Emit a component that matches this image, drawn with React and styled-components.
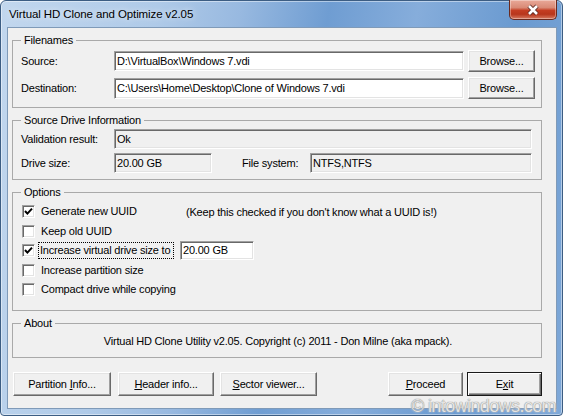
import React from "react";
import styled, { createGlobalStyle } from "styled-components";

const GlobalStyle = createGlobalStyle`
  html, body {
    margin: 0;
    padding: 0;
    background: #ffffff;
  }
  body {
    font-family: "Liberation Sans", Arial, sans-serif;
    color: #000;
  }
`;

const Page = styled.div`
  position: relative;
  width: 568px;
  height: 419px;
  background: #ffffff;
  overflow: hidden;
`;

const Window = styled.div`
  box-sizing: border-box;
  width: 563px;
  height: 416px;
  display: flex;
  flex-direction: column;
  padding: 0 5px 6px 6px;
  border: 1px solid #3c5d83;
  border-radius: 6px 6px 4px 4px;
  background: linear-gradient(
    100deg,
    #c2d7ee 0%,
    #afcae8 25%,
    #98b9e0 38%,
    #6f9dd2 52%,
    #86addb 66%,
    #6a9ad0 82%,
    #7ea8d8 100%
  );
  box-shadow: inset 0 0 0 1px rgba(255, 255, 255, 0.45);
`;

const TitleBar = styled.div`
  height: 26px;
  display: flex;
  align-items: center;
  padding-left: 2px;
`;

const Title = styled.span`
  font-size: 11.5px;
  letter-spacing: -0.1px;
  color: #000;
  text-shadow: 0 0 6px rgba(255, 255, 255, 0.9);
`;

const CloseButton = styled.div`
  box-sizing: border-box;
  margin-left: auto;
  align-self: flex-start;
  margin-top: -1px;
  width: 48px;
  height: 20px;
  display: flex;
  align-items: center;
  justify-content: center;
  border: 1px solid #6a2a1f;
  border-top: none;
  border-radius: 0 0 5px 5px;
  background: linear-gradient(
    180deg,
    #e9a999 0%,
    #d98a76 40%,
    #c43d22 55%,
    #b8361c 75%,
    #d77a60 100%
  );
  box-shadow: inset 0 0 0 1px rgba(255, 255, 255, 0.35);
`;

const Client = styled.div`
  flex: 1;
  display: flex;
  flex-direction: column;
  background: #f0f0f0;
  border: 1px solid #7f9ab8;
  padding: 6px 14px 0 4px;
`;

const Group = styled.fieldset`
  margin: ${(p) => p.$mt || 0}px 0 0 0;
  padding: ${(p) => p.$pt}px ${(p) => p.$pr || 6}px ${(p) => p.$pb}px 8px;
  border: 1px solid #a9a9a9;
  min-width: 0;
  display: flex;
  flex-direction: column;
`;

const Legend = styled.legend`
  padding: 0 3px;
  font-size: 11px;
  line-height: 13px;
  letter-spacing: -0.2px;
`;

const Row = styled.div`
  display: flex;
  align-items: center;
  height: ${(p) => p.$h || 22}px;
  margin-top: ${(p) => p.$mt || 0}px;
`;

const Label = styled.span`
  flex: none;
  width: ${(p) => (p.$w ? `${p.$w}px` : "auto")};
  margin-left: ${(p) => p.$ml || 0}px;
  font-size: 11px;
  letter-spacing: -0.2px;
  white-space: nowrap;
`;

const Field = styled.div`
  box-sizing: border-box;
  flex: ${(p) => (p.$w ? "none" : 1)};
  width: ${(p) => (p.$w ? `${p.$w}px` : "auto")};
  height: ${(p) => p.$h || 20}px;
  margin-left: ${(p) => p.$ml || 0}px;
  padding: 0 2px;
  background: ${(p) => (p.$ro ? "#f0f0f0" : "#ffffff")};
  border: 1px solid;
  border-color: #a0a0a0 #ffffff #ffffff #a0a0a0;
  box-shadow: inset 1px 1px #696969, inset -1px -1px #e3e3e3;
  font-size: 11px;
  letter-spacing: -0.2px;
  line-height: ${(p) => (p.$h || 20) - 2}px;
  white-space: nowrap;
  overflow: hidden;
`;

const Button = styled.div`
  box-sizing: border-box;
  flex: none;
  width: ${(p) => p.$w}px;
  height: ${(p) => p.$h || 24}px;
  margin-left: ${(p) => p.$ml || 0}px;
  display: flex;
  align-items: center;
  justify-content: center;
  background: #f0f0f0;
  border: 1px solid;
  border-color: ${(p) =>
    p.$default ? "#1a1a1a" : "#ffffff #696969 #696969 #ffffff"};
  box-shadow: ${(p) =>
    p.$default
      ? "inset 1px 1px #ffffff, inset -1px -1px #696969, inset -2px -2px #a0a0a0"
      : "inset -1px -1px #a0a0a0, inset 1px 1px #e3e3e3"};
  font-size: 11px;
  letter-spacing: -0.2px;
  white-space: nowrap;

  u {
    text-decoration: underline;
    text-underline-offset: 1px;
  }
`;

const Spacer = styled.div`
  flex: 1;
`;

const CheckRow = styled.div`
  display: flex;
  align-items: center;
  height: 19.5px;
`;

const CheckBox = styled.span`
  box-sizing: border-box;
  flex: none;
  width: 13px;
  height: 13px;
  margin: 0 6px 0 1px;
  display: flex;
  align-items: center;
  justify-content: center;
  background: #ffffff;
  border: 1px solid;
  border-color: #a0a0a0 #ffffff #ffffff #a0a0a0;
  box-shadow: inset 1px 1px #696969, inset -1px -1px #e3e3e3;
`;

const CheckText = styled.span`
  box-sizing: border-box;
  flex: none;
  width: ${(p) => (p.$w ? `${p.$w}px` : "auto")};
  margin-left: ${(p) => (p.$focus ? -2 : 0)}px;
  padding: ${(p) => (p.$focus ? "0 1px" : "0")};
  outline: ${(p) => (p.$focus ? "1px dotted #000" : "none")};
  line-height: 15px;
  font-size: 11px;
  letter-spacing: -0.2px;
  white-space: nowrap;
`;

const AboutText = styled.div`
  text-align: center;
  font-size: 11px;
  line-height: 13px;
  letter-spacing: -0.2px;
`;

const ButtonBar = styled.div`
  display: flex;
  align-items: center;
  margin-top: 14px;
  padding-left: 1px;
`;

const Watermark = styled.div`
  position: absolute;
  right: 12px;
  bottom: 2px;
  font-family: "Liberation Sans", Arial, sans-serif;
  font-size: 18px;
  letter-spacing: -0.6px;
  color: #e4e4e4;
  text-shadow: 0 0 1px #8c8c8c, 0 0 1px #8c8c8c, 0 0 2px #ffffff;
`;

const Check = () => (
  <svg width="9" height="9" viewBox="0 0 9 9">
    <path d="M1 4 L3.4 6.6 L8 1.6" fill="none" stroke="#000" strokeWidth="2" />
  </svg>
);

const CloseGlyph = () => (
  <svg width="14" height="12" viewBox="0 0 14 12">
    <path d="M3 2 L11 10 M11 2 L3 10" stroke="#5b2a22" strokeWidth="4.4" />
    <path d="M3 2 L11 10 M11 2 L3 10" stroke="#ffffff" strokeWidth="2.6" />
  </svg>
);

const options = [
  { text: "Generate new UUID", checked: true, w: 145, note: true },
  { text: "Keep old UUID", checked: false },
  { text: "Increase virtual drive size to", checked: true, focus: true, w: 134 },
  { text: "Increase partition size", checked: false },
  { text: "Compact drive while copying", checked: false },
];

const App = () => {
  return (
    <>
      <GlobalStyle />
      <Page>
        <Window>
          <TitleBar>
            <Title>Virtual HD Clone and Optimize v2.05</Title>
            <CloseButton>
              <CloseGlyph />
            </CloseButton>
          </TitleBar>
          <Client>
            <Group $pt={3} $pb={8}>
              <Legend>Filenames</Legend>
              <Row>
                <Label $w={93}>Source:</Label>
                <Field>D:\VirtualBox\Windows 7.vdi</Field>
                <Button $w={67} $h={22} $ml={4}>
                  <span>Browse...</span>
                </Button>
              </Row>
              <Row $mt={5}>
                <Label $w={93}>Destination:</Label>
                <Field $h={21}>C:\Users\Home\Desktop\Clone of Windows 7.vdi</Field>
                <Button $w={67} $h={22} $ml={4}>
                  <span>Browse...</span>
                </Button>
              </Row>
            </Group>

            <Group $mt={6} $pt={2} $pb={6} $pr={9}>
              <Legend>Source Drive Information</Legend>
              <Row $h={20}>
                <Label $w={93}>Validation result:</Label>
                <Field $ro>Ok</Field>
              </Row>
              <Row $h={20} $mt={4}>
                <Label $w={93}>Drive size:</Label>
                <Field $ro $w={98}>
                  20.00 GB
                </Field>
                <Label $w={68} $ml={30}>
                  File system:
                </Label>
                <Field $ro>NTFS,NTFS</Field>
              </Row>
            </Group>

            <Group $mt={6} $pt={3} $pb={10}>
              <Legend>Options</Legend>
              {options.map((o) => (
                <CheckRow key={o.text}>
                  <CheckBox>{o.checked && <Check />}</CheckBox>
                  <CheckText $w={o.w} $focus={o.focus}>
                    {o.text}
                  </CheckText>
                  {o.note && (
                    <Label>(Keep this checked if you don't know what a UUID is!)</Label>
                  )}
                  {o.focus && (
                    <Field $w={74} $h={19} $ml={7}>
                      20.00 GB
                    </Field>
                  )}
                </CheckRow>
              ))}
            </Group>

            <Group $mt={6} $pt={5} $pb={9}>
              <Legend>About</Legend>
              <AboutText>
                Virtual HD Clone Utility v2.05. Copyright (c) 2011 - Don Milne (aka mpack).
              </AboutText>
            </Group>

            <ButtonBar>
              <Button $w={98}>
                <span>
                  Partition <u>I</u>nfo...
                </span>
              </Button>
              <Button $w={96} $ml={7}>
                <span>
                  <u>H</u>eader info...
                </span>
              </Button>
              <Button $w={97} $ml={6}>
                <span>
                  <u>S</u>ector viewer...
                </span>
              </Button>
              <Spacer />
              <Button $w={75}>
                <span>
                  <u>P</u>roceed
                </span>
              </Button>
              <Button $w={75} $ml={4} $default>
                <span>
                  E<u>x</u>it
                </span>
              </Button>
            </ButtonBar>
          </Client>
        </Window>
        <Watermark>© intowindows.com</Watermark>
      </Page>
    </>
  );
};

export default App;
